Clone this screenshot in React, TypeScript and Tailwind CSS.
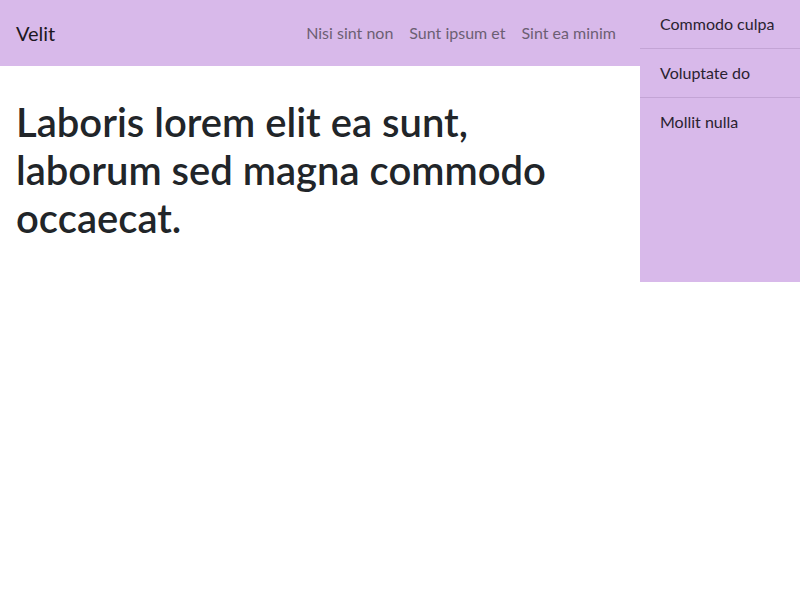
const navLinks = ['Nisi sint non', 'Sunt ipsum et', 'Sint ea minim'];
const menuItems = ['Commodo culpa', 'Voluptate do', 'Mollit nulla'];

const font = { fontFamily: '"Segoe UI", Lato, "Noto Sans", "Liberation Sans", sans-serif' };

export default function App() {
  return (
    <div className="flex items-start w-[800px] min-h-[600px] bg-white" style={font}>
      <div className="flex-1 min-w-0">
        <nav className="h-[66px] bg-[#d8b9ea] flex items-center justify-between px-4">
          <a className="text-[20px] leading-[30px] text-[#1d1720]">Velit</a>
          <ul className="flex items-center">
            {navLinks.map((link) => (
              <li key={link}>
                <a className="block px-2 text-[16px] leading-6 text-[#6c5f73]">{link}</a>
              </li>
            ))}
          </ul>
        </nav>
        <main className="px-4 pt-8">
          <h1 className="max-w-[580px] text-[40px] leading-[48px] font-semibold text-[#212529]">
            Laboris lorem elit ea sunt, laborum sed magna commodo occaecat.
          </h1>
        </main>
      </div>
      <aside className="w-[160px] h-[282px] bg-[#d8b9ea]">
        {menuItems.map((item) => (
          <a
            key={item}
            className="block px-5 py-3 text-[16px] leading-6 text-[#2a2230] border-b border-[#c3a4d5] last:border-b-0"
          >
            {item}
          </a>
        ))}
      </aside>
    </div>
  );
}
